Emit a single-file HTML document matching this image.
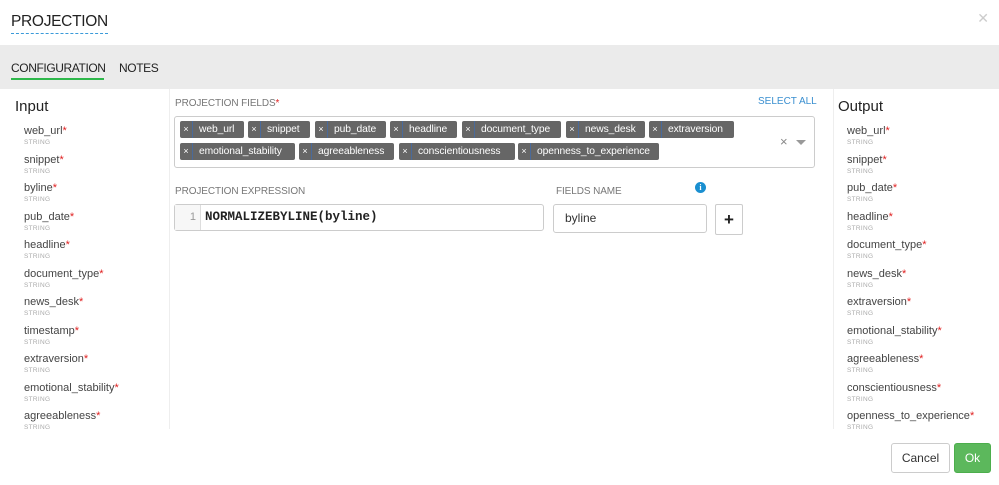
<!DOCTYPE html>
<html><head><style>
*{box-sizing:border-box;margin:0;padding:0}
body{width:999px;height:485px;overflow:hidden;background:#fff;font-family:"Liberation Sans",sans-serif;color:#333;position:relative}
.abs{position:absolute}
.title{left:11px;top:12px;font-size:15.5px;color:#222;border-bottom:1px dashed #3a9ad9;line-height:20px;padding-bottom:1px;letter-spacing:-.3px;white-space:nowrap}
.close{right:10px;top:10px;color:#ccc;font-size:14px}
.bar{left:0;top:45px;width:999px;height:44px;background:#ebebeb}
.tab{top:61px;font-size:12px;color:#222;letter-spacing:-.4px;white-space:nowrap}
.tab1{left:11px;border-bottom:2px solid #2eb84b;padding-bottom:3px;width:93px}
.list{font-size:11px;color:#444}
.item{position:absolute;white-space:nowrap}
.item .s{display:block;font-size:6.5px;color:#aaa;margin-top:2px;letter-spacing:.3px}
.r{color:#e02020}
.lbl{font-size:10px;color:#777;letter-spacing:-.1px}
.tagbox{left:174px;top:116px;width:641px;height:52px;border:1px solid #ccc;border-radius:3px}
.tag{position:absolute;height:17px;background:#666;color:#fff;font-size:10.3px;line-height:17px;border-radius:2px;white-space:nowrap;overflow:hidden;letter-spacing:-.1px}
.tag b{display:inline-block;vertical-align:top;height:17px;font-weight:normal;width:13px;text-align:center;font-size:9px;border-right:1px solid #4a6a9a;margin-right:6px}
.btn{border-radius:3px;font-size:12px;text-align:center}
</style></head><body>
<div class="abs title">PROJECTION</div>
<div class="abs close">✕</div>
<div class="abs bar"></div>
<div class="abs tab tab1">CONFIGURATION</div>
<div class="abs tab" style="left:119px">NOTES</div>
<div class="abs" style="left:169px;top:89px;width:1px;height:340px;background:#eee"></div>
<div class="abs" style="left:833px;top:89px;width:1px;height:340px;background:#eee"></div>
<div class="abs" style="left:15px;top:98px;font-size:15px;color:#222">Input</div>
<div class="abs" style="left:838px;top:98px;font-size:15px;color:#222">Output</div>
<div class="abs list" style="left:24px;top:125px">
<div class="item" style="top:0">web_url<span class="r">*</span><span class="s">STRING</span></div>
<div class="item" style="top:28.5px">snippet<span class="r">*</span><span class="s">STRING</span></div>
<div class="item" style="top:57px">byline<span class="r">*</span><span class="s">STRING</span></div>
<div class="item" style="top:85.5px">pub_date<span class="r">*</span><span class="s">STRING</span></div>
<div class="item" style="top:114px">headline<span class="r">*</span><span class="s">STRING</span></div>
<div class="item" style="top:142.5px">document_type<span class="r">*</span><span class="s">STRING</span></div>
<div class="item" style="top:171px">news_desk<span class="r">*</span><span class="s">STRING</span></div>
<div class="item" style="top:199.5px">timestamp<span class="r">*</span><span class="s">STRING</span></div>
<div class="item" style="top:228px">extraversion<span class="r">*</span><span class="s">STRING</span></div>
<div class="item" style="top:256.5px">emotional_stability<span class="r">*</span><span class="s">STRING</span></div>
<div class="item" style="top:285px">agreeableness<span class="r">*</span><span class="s">STRING</span></div>
</div>
<div class="abs list" style="left:847px;top:125px">
<div class="item" style="top:0">web_url<span class="r">*</span><span class="s">STRING</span></div>
<div class="item" style="top:28.5px">snippet<span class="r">*</span><span class="s">STRING</span></div>
<div class="item" style="top:57px">pub_date<span class="r">*</span><span class="s">STRING</span></div>
<div class="item" style="top:85.5px">headline<span class="r">*</span><span class="s">STRING</span></div>
<div class="item" style="top:114px">document_type<span class="r">*</span><span class="s">STRING</span></div>
<div class="item" style="top:142.5px">news_desk<span class="r">*</span><span class="s">STRING</span></div>
<div class="item" style="top:171px">extraversion<span class="r">*</span><span class="s">STRING</span></div>
<div class="item" style="top:199.5px">emotional_stability<span class="r">*</span><span class="s">STRING</span></div>
<div class="item" style="top:228px">agreeableness<span class="r">*</span><span class="s">STRING</span></div>
<div class="item" style="top:256.5px">conscientiousness<span class="r">*</span><span class="s">STRING</span></div>
<div class="item" style="top:285px">openness_to_experience<span class="r">*</span><span class="s">STRING</span></div>
</div>
<div class="abs lbl" style="left:175px;top:98px">PROJECTION FIELDS<span class="r">*</span></div>
<div class="abs" style="left:758px;top:96px;font-size:10px;color:#3a8fd0">SELECT ALL</div>
<div class="abs tagbox"></div>
<div class="tag" style="left:180px;top:121px;width:64px"><b>×</b>web_url</div>
<div class="tag" style="left:248px;top:121px;width:62px"><b>×</b>snippet</div>
<div class="tag" style="left:315px;top:121px;width:71px"><b>×</b>pub_date</div>
<div class="tag" style="left:390px;top:121px;width:67px"><b>×</b>headline</div>
<div class="tag" style="left:462px;top:121px;width:99px"><b>×</b>document_type</div>
<div class="tag" style="left:566px;top:121px;width:79px"><b>×</b>news_desk</div>
<div class="tag" style="left:649px;top:121px;width:85px"><b>×</b>extraversion</div>
<div class="tag" style="left:180px;top:143px;width:115px"><b>×</b>emotional_stability</div>
<div class="tag" style="left:299px;top:143px;width:95px"><b>×</b>agreeableness</div>
<div class="tag" style="left:399px;top:143px;width:116px"><b>×</b>conscientiousness</div>
<div class="tag" style="left:518px;top:143px;width:141px"><b>×</b>openness_to_experience</div>
<div class="abs" style="left:780px;top:134px;color:#888;font-size:13px">×</div>
<div class="abs" style="left:796px;top:140px;width:0;height:0;border-left:5px solid transparent;border-right:5px solid transparent;border-top:5px solid #999"></div>
<div class="abs lbl" style="left:175px;top:186px">PROJECTION EXPRESSION</div>
<div class="abs" style="left:174px;top:204px;width:370px;height:27px;border:1px solid #ccc;border-radius:3px;background:#fff">
<div style="position:absolute;left:0;top:0;width:26px;height:25px;background:#f7f7f7;border-right:1px solid #ddd;color:#999;font-size:11px;text-align:right;padding-right:4px;line-height:25px">1</div>
<div style="position:absolute;left:30px;top:0;line-height:25px;font-family:'Liberation Mono',monospace;font-size:12.5px;font-weight:bold;color:#222">NORMALIZEBYLINE(byline)</div>
</div>
<div class="abs lbl" style="left:556px;top:186px">FIELDS NAME</div>
<div class="abs" style="left:695px;top:182px;width:11px;height:11px;border-radius:50%;background:#1a8fd0;color:#fff;font-size:8px;font-weight:bold;text-align:center;line-height:11px;font-family:'Liberation Serif',serif">i</div>
<div class="abs" style="left:553px;top:204px;width:154px;height:29px;border:1px solid #ccc;border-radius:3px;font-size:12px;line-height:27px;padding-left:11px;color:#333">byline</div>
<div class="abs" style="left:715px;top:204px;width:28px;height:31px;border:1px solid #ccc;border-radius:2px;text-align:center;line-height:29px;font-size:17px;font-weight:bold;color:#222">+</div>
<div class="abs btn" style="left:891px;top:443px;width:59px;height:30px;border:1px solid #ccc;line-height:28px;color:#333">Cancel</div>
<div class="abs btn" style="left:954px;top:443px;width:37px;height:30px;background:#5cb85c;border:1px solid #4cae4c;line-height:28px;color:#fff">Ok</div>
</body></html>
